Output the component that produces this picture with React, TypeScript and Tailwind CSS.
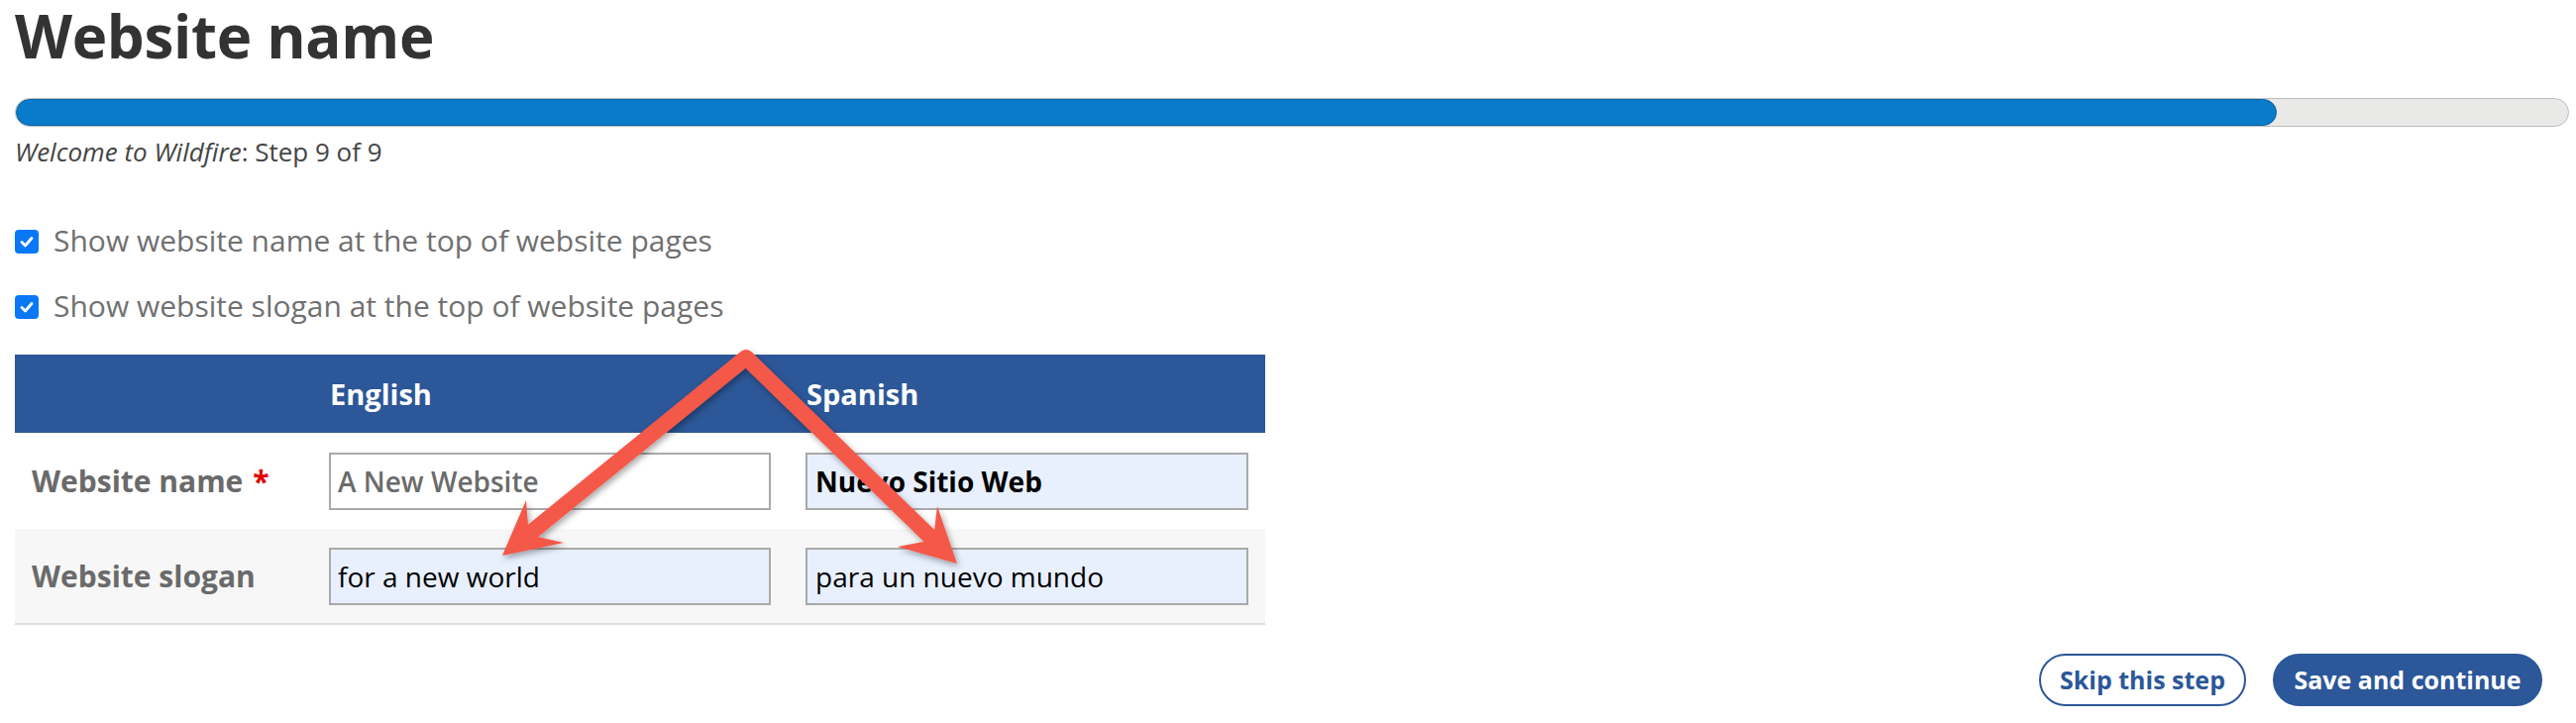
import React from 'react';

const rows = [
  { label: 'Website name', required: true, en: 'A New Website', es: 'Nuevo Sitio Web', enClass: 'bg-white text-[#6b6b6b] font-semibold', esClass: 'bg-[#e8f0fe] text-black font-bold', rowClass: 'bg-white' },
  { label: 'Website slogan', required: false, en: 'for a new world', es: 'para un nuevo mundo', enClass: 'bg-[#e8f0fe] text-black', esClass: 'bg-[#e8f0fe] text-black', rowClass: 'bg-[#f7f7f7] border-b-2 border-[#dedede]' },
];

function CheckBox() {
  return (
    <span className="w-[24px] h-[24px] rounded-[4px] bg-[#0a78f5] flex items-center justify-center shrink-0">
      <svg width="16" height="16" viewBox="0 0 16 16" fill="none">
        <path d="M3 8.5 L6.5 12 L13 4.5" stroke="white" strokeWidth="2.8" strokeLinecap="round" strokeLinejoin="round" />
      </svg>
    </span>
  );
}

function Arrows() {
  return (
    <svg className="absolute left-0 top-0 pointer-events-none" width="2600" height="730" viewBox="0 0 2600 730">
      <defs>
        <filter id="shadow" x="-20%" y="-20%" width="140%" height="140%">
          <feDropShadow dx="2" dy="3" stdDeviation="3" floodColor="#000" floodOpacity="0.35" />
        </filter>
      </defs>
      <g filter="url(#shadow)" fill="#f4594a">
        <polyline points="533,540 753,361 942,545" fill="none" stroke="#f4594a" strokeWidth="16" strokeLinejoin="round" />
        <polygon points="507,561 531,505 533,530 543,542 569,548" />
        <polygon points="966,569 946,511 943,536 932,547 906,552" />
      </g>
    </svg>
  );
}

export default function App() {
  return (
    <div className="relative w-[2600px] h-[730px] bg-white overflow-hidden" style={{ fontFamily: '"Open Sans", "Noto Sans", sans-serif' }}>
      <div className="pl-[15px] pr-[7px]">
        {/* Title */}
        <h1 className="-mt-[5px] text-[60px] leading-[82px] font-bold text-[#333] tracking-[-0.3px]">Website name</h1>

        {/* Progress */}
        <div className="mt-[22px] h-[29px] rounded-full bg-[#e9e9e7] border border-[#bdbdbd] overflow-hidden flex">
          <div className="w-[88.6%] h-full rounded-full bg-[#087bcb] border border-[#05609f]" />
        </div>
        <p className="mt-[7px] text-[26px] leading-[36px] text-[#444]">
          <em>Welcome to Wildfire</em>: Step 9 of 9
        </p>

        {/* Checkboxes */}
        <div className="mt-[40px] flex flex-col">
          <label className="h-[66px] flex items-center gap-[15px] text-[30px] text-[#707070]">
            <CheckBox />
            <span className="-mt-[4px]">Show website name at the top of website pages</span>
          </label>
          <label className="h-[66px] flex items-center gap-[15px] text-[30px] text-[#707070]">
            <CheckBox />
            <span className="-mt-[4px]">Show website slogan at the top of website pages</span>
          </label>
        </div>

        {/* Translation table */}
        <div className="mt-[15px] w-[1262px]">
          <div className="grid grid-cols-[307px_481px_474px] h-[79px] bg-[#2c5798] text-white font-bold text-[29px]">
            <div />
            <div className="flex items-center pl-[11px]">English</div>
            <div className="flex items-center pl-[11px]">Spanish</div>
          </div>
          {rows.map((r) => (
            <div key={r.label} className={`grid grid-cols-[307px_481px_474px] h-[97px] ${r.rowClass}`}>
              <div className="flex items-center pl-[17px] text-[30px] font-bold text-[#6a6a6a]">
                {r.label}
                {r.required && <span className="ml-[10px] text-[#e00000]">*</span>}
              </div>
              <div className="flex items-center pl-[10px]">
                <input readOnly value={r.en} className={`w-[446px] h-[58px] border-2 border-[#a9a9a9] px-[7px] text-[28px] outline-none ${r.enClass}`} />
              </div>
              <div className="flex items-center pl-[10px]">
                <input readOnly value={r.es} className={`w-[447px] h-[58px] border-2 border-[#a9a9a9] px-[8px] text-[28px] outline-none ${r.esClass}`} />
              </div>
            </div>
          ))}
        </div>

        {/* Actions */}
        <div className="mt-[29px] flex justify-end gap-[27px] pr-[27px]">
          <button className="w-[209px] h-[53px] rounded-full border-2 border-[#2c5798] bg-white text-[#2c5798] font-bold text-[25px]">
            Skip this step
          </button>
          <button className="w-[272px] h-[53px] rounded-full bg-[#2c5798] text-white font-bold text-[25px]">
            Save and continue
          </button>
        </div>
      </div>
      <Arrows />
    </div>
  );
}
